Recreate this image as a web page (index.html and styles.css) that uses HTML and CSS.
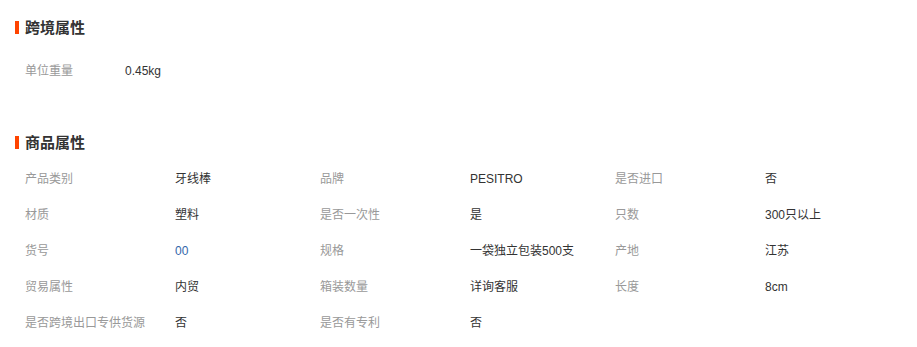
FILE: index.html
```html
<!DOCTYPE html>
<html lang="zh-CN">
<head>
<meta charset="utf-8">
<link rel="stylesheet" href="styles.css">
</head>
<body>
<div class="page">
  <section class="section section-cross">
    <h2 class="title">跨境属性</h2>
    <div class="grid">
      <div class="label">单位重量</div><div class="value-narrow">0.45kg</div>
    </div>
  </section>
  <section class="section section-goods">
    <h2 class="title">商品属性</h2>
    <div class="grid grid-six">
      <div class="label">产品类别</div><div class="value">牙线棒</div>
      <div class="label">品牌</div><div class="value">PESITRO</div>
      <div class="label">是否进口</div><div class="value">否</div>

      <div class="label">材质</div><div class="value">塑料</div>
      <div class="label">是否一次性</div><div class="value">是</div>
      <div class="label">只数</div><div class="value">300只以上</div>

      <div class="label">货号</div><div class="value link">00</div>
      <div class="label">规格</div><div class="value">一袋独立包装500支</div>
      <div class="label">产地</div><div class="value">江苏</div>

      <div class="label">贸易属性</div><div class="value">内贸</div>
      <div class="label">箱装数量</div><div class="value">详询客服</div>
      <div class="label">长度</div><div class="value">8cm</div>

      <div class="label">是否跨境出口专供货源</div><div class="value">否</div>
      <div class="label">是否有专利</div><div class="value">否</div>
    </div>
  </section>
</div>
</body>
</html>
```
FILE: styles.css
```css
html, body {
  margin: 0;
  padding: 0;
  background: #fff;
}
.page {
  font-family: "Liberation Sans", "Noto Sans CJK SC", sans-serif;
  font-size: 12px;
  color: #333;
  padding-top: 18px;
}
.section-goods {
  margin-top: 44px;
}
.title {
  margin: 0;
  height: 20px;
  line-height: 20px;
  font-size: 15px;
  font-weight: bold;
  color: #333;
  padding-left: 25px;
  position: relative;
}
.title::before {
  content: "";
  position: absolute;
  left: 15px;
  top: 3px;
  width: 4px;
  height: 13px;
  background: #ff4400;
}
.section-cross .grid {
  margin-top: 15px;
}
.section-goods .grid {
  margin-top: 8px;
}
.grid {
  display: grid;
  grid-template-columns: 100px 200px;
  padding-left: 25px;
}
.grid-six {
  grid-template-columns: 150px 145px 150px 145px 150px 145px;
}
.grid > div {
  height: 36px;
  line-height: 36px;
  white-space: nowrap;
}
.label {
  color: #999;
}
.value, .value-narrow {
  color: #333;
}
.link {
  color: #3366aa;
}
```
